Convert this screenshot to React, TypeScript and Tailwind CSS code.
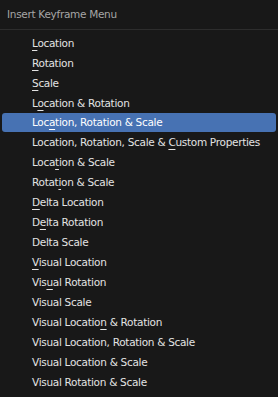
import React from 'react';

type Item = { label: string; key?: number };

// key = index of the underlined accelerator character
const items: Item[] = [
  { label: 'Location', key: 0 },
  { label: 'Rotation', key: 0 },
  { label: 'Scale', key: 0 },
  { label: 'Location & Rotation', key: 1 },
  { label: 'Location, Rotation & Scale', key: 3 },
  { label: 'Location, Rotation, Scale & Custom Properties', key: 28 },
  { label: 'Location & Scale', key: 4 },
  { label: 'Rotation & Scale', key: 5 },
  { label: 'Delta Location', key: 0 },
  { label: 'Delta Rotation', key: 1 },
  { label: 'Delta Scale' },
  { label: 'Visual Location', key: 0 },
  { label: 'Visual Rotation', key: 3 },
  { label: 'Visual Scale' },
  { label: 'Visual Location & Rotation', key: 14 },
  { label: 'Visual Location, Rotation & Scale' },
  { label: 'Visual Location & Scale' },
  { label: 'Visual Rotation & Scale' },
];

const SELECTED = 4;

function Label({ item }: { item: Item }) {
  if (item.key === undefined) return <span>{item.label}</span>;
  const k = item.key;
  return (
    <span>
      {item.label.slice(0, k)}
      <span className="underline decoration-1 underline-offset-[3px]">{item.label[k]}</span>
      {item.label.slice(k + 1)}
    </span>
  );
}

export default function App() {
  return (
    <div
      className="w-[278px] h-[397px] bg-[#181818] overflow-hidden text-[10.5px] tracking-[-0.3px] leading-none whitespace-nowrap"
      style={{ fontFamily: '"DejaVu Sans", "Noto Sans", sans-serif' }}
    >
      <div className="h-[30px] flex items-center pl-[7px] text-[#a6a6a6] border-b border-[#2d2d2d]">
        Insert Keyframe Menu
      </div>
      <div className="pt-[4px] px-[2px]">
        {items.map((item, i) => (
          <div key={item.label} className="h-[20px]">
            <div
              className={
                i === SELECTED
                  ? 'h-[19px] -mt-[1px] flex items-center pl-[30px] rounded-[3px] bg-[#4772b3] text-white'
                  : 'h-[19px] flex items-center pl-[30px] text-[#e3e3e3]'
              }
            >
              <Label item={item} />
            </div>
          </div>
        ))}
      </div>
    </div>
  );
}
